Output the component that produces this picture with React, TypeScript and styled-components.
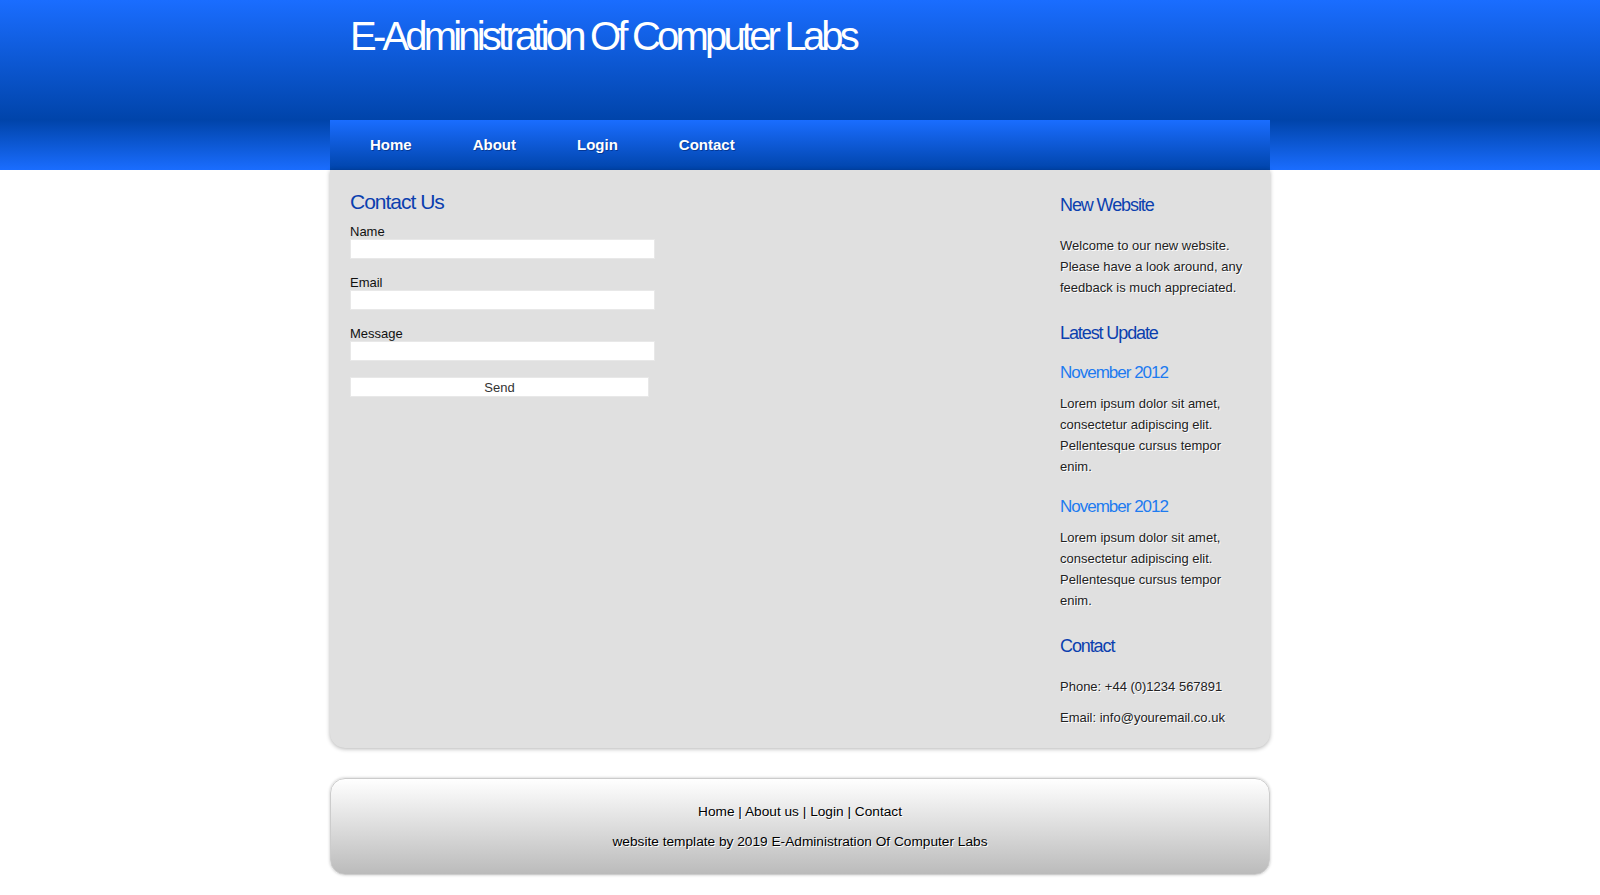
import React from "react";
import styled, { createGlobalStyle } from "styled-components";

const FONT = `"Liberation Sans", Arial, sans-serif`;

const GlobalStyle = createGlobalStyle`
  html, body { margin: 0; padding: 0; background: #ffffff; }
  body { font-family: ${FONT}; }
  * { box-sizing: border-box; }
`;

const Header = styled.header`
  background: linear-gradient(to bottom, #1a6dff 0px, #0044aa 120px, #1a6dff 170px);
`;

const HeaderInner = styled.div`
  width: 940px;
  margin: 0 auto;
`;

const Logo = styled.div`
  height: 120px;
  padding: 12px 0 0 20px;
`;

const Title = styled.h1`
  margin: 0;
  font: normal 40px/48px ${FONT};
  letter-spacing: -3.8px;
  color: #ffffff;
`;

const Nav = styled.nav`
  height: 50px;
  display: flex;
  padding-left: 9.5px;
  background: linear-gradient(to bottom, #1a6dff, #0044aa);
`;

const NavLink = styled.a`
  padding: 0 30.5px;
  font: bold 15px/50px ${FONT};
  color: #ffffff;
  text-decoration: none;
  text-shadow: 1px 1px 0 rgba(0, 20, 80, 0.45);
`;

const Main = styled.main`
  width: 940px;
  margin: 0 auto;
  display: flex;
  padding: 20px 19px 20px 20px;
  background: #e0e0e0;
  border-radius: 0 0 15px 15px;
  box-shadow: 0 1px 4px rgba(0, 0, 0, 0.3);
`;

const Content = styled.section`
  flex: 1;
`;

const PageHeading = styled.h1`
  margin: 0 0 10px;
  font: normal 21px/24px ${FONT};
  letter-spacing: -1px;
  color: #0b3faf;
`;

const Field = styled.div`
  margin-bottom: 16px;
`;

const Label = styled.label`
  display: block;
  font: normal 13px/15px ${FONT};
  color: #111111;
`;

const Input = styled.input`
  display: block;
  width: 305px;
  height: 20px;
  margin: 0;
  padding: 0 3px;
  border: 1px solid #e8e8e8;
  background: #ffffff;
  font: 13px ${FONT};
`;

const SendButton = styled.button`
  display: block;
  width: 299px;
  height: 20px;
  margin-top: 16px;
  padding: 0;
  border: 1px solid #e8e8e8;
  background: #ffffff;
  font: normal 13px/19px ${FONT};
  color: #333333;
`;

const Sidebar = styled.aside`
  width: 191px;
  margin-top: 4px;
`;

const SideHeading = styled.h3<{ $gap: number }>`
  margin: 0 0 ${(p) => p.$gap}px;
  font: normal 18px/22px ${FONT};
  letter-spacing: -1.1px;
  color: #0b3faf;
`;

const MonthHeading = styled.h4`
  margin: 0 0 9px;
  font: normal 17px/22px ${FONT};
  letter-spacing: -1px;
  color: #1d7bf0;
`;

const SideText = styled.p<{ $gap: number }>`
  margin: 0 0 ${(p) => p.$gap}px;
  font: normal 13px/21px ${FONT};
  color: #222222;
  text-shadow: 1px 1px 0 #ffffff;
`;

const Footer = styled.footer`
  width: 940px;
  height: 97px;
  margin: 30px auto 20px;
  padding-top: 22px;
  border: 1px solid #cccccc;
  border-radius: 15px;
  background: linear-gradient(to bottom, #ffffff, #bbbbbb);
  box-shadow: 0 0 3px rgba(0, 0, 0, 0.25);
  text-align: center;
`;

const FooterLine = styled.p<{ $gap: number }>`
  margin: ${(p) => p.$gap}px 0 0;
  font: normal 13.7px/21px ${FONT};
  color: #000000;
  text-shadow: 1px 1px 0 #ffffff;
`;

const FooterLink = styled.a`
  color: #000000;
  text-decoration: none;
`;

const fields = ["Name", "Email", "Message"];

export default function App() {
  return (
    <>
      <GlobalStyle />
      <Header>
        <HeaderInner>
          <Logo>
            <Title>E-Administration Of Computer Labs</Title>
          </Logo>
          <Nav>
            <NavLink href="#">Home</NavLink>
            <NavLink href="#">About</NavLink>
            <NavLink href="#">Login</NavLink>
            <NavLink href="#">Contact</NavLink>
          </Nav>
        </HeaderInner>
      </Header>
      <Main>
        <Content>
          <PageHeading>Contact Us</PageHeading>
          {fields.map((f) => (
            <Field key={f}>
              <Label>{f}</Label>
              <Input type="text" />
            </Field>
          ))}
          <SendButton type="button">Send</SendButton>
        </Content>
        <Sidebar>
          <SideHeading $gap={19}>New Website</SideHeading>
          <SideText $gap={24}>
            Welcome to our new website. Please have a look around, any feedback is much appreciated.
          </SideText>
          <SideHeading $gap={18}>Latest Update</SideHeading>
          <MonthHeading>November 2012</MonthHeading>
          <SideText $gap={19}>
            Lorem ipsum dolor sit amet, consectetur adipiscing elit. Pellentesque cursus tempor enim.
          </SideText>
          <MonthHeading>November 2012</MonthHeading>
          <SideText $gap={24}>
            Lorem ipsum dolor sit amet, consectetur adipiscing elit. Pellentesque cursus tempor enim.
          </SideText>
          <SideHeading $gap={19}>Contact</SideHeading>
          <SideText $gap={10}>Phone: +44 (0)1234 567891</SideText>
          <SideText $gap={0}>Email: info@youremail.co.uk</SideText>
        </Sidebar>
      </Main>
      <Footer>
        <FooterLine $gap={0}>
          <FooterLink href="#">Home</FooterLink> | <FooterLink href="#">About us</FooterLink> |{" "}
          <FooterLink href="#">Login</FooterLink> | <FooterLink href="#">Contact</FooterLink>
        </FooterLine>
        <FooterLine $gap={9}>website template by 2019 E-Administration Of Computer Labs</FooterLine>
      </Footer>
    </>
  );
}
